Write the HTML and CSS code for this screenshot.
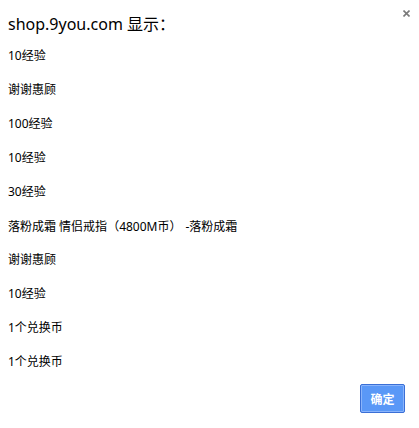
FILE: index.html
```html
<!DOCTYPE html>
<html lang="zh-CN">
<head>
<meta charset="utf-8">
<link rel="stylesheet" href="styles.css">
</head>
<body>
<div class="dialog">
  <div class="close" aria-label="关闭">
    <svg width="7" height="7" viewBox="0 0 7 7"><path d="M0.5 0.5L6.5 6.5M6.5 0.5L0.5 6.5" stroke="#7a7a7a" stroke-width="1.6" fill="none"/></svg>
  </div>
  <div class="title">shop.9you.com 显示<span class="cjk">：</span></div>
  <div class="message">
    <div class="item">10经验</div>
    <div class="item">谢谢惠顾</div>
    <div class="item">100经验</div>
    <div class="item">10经验</div>
    <div class="item">30经验</div>
    <div class="item">落粉成霜 情侣戒指<span class="cjk">（</span>4800M币<span class="cjk rp">）</span>-落粉成霜</div>
    <div class="item">谢谢惠顾</div>
    <div class="item">10经验</div>
    <div class="item">1个兑换币</div>
    <div class="item">1个兑换币</div>
  </div>
  <div class="actions">
    <button class="ok">确定</button>
  </div>
</div>
</body>
</html>
```

FILE: styles.css
```css
html, body {
  margin: 0;
  padding: 0;
  background: #ffffff;
}
body {
  font-family: "Noto Sans", "Noto Sans CJK SC", sans-serif;
  color: #000;
  width: 419px;
  height: 428px;
  overflow: hidden;
}
.dialog {
  position: relative;
  padding: 12px 14px 0 8px;
}
.close {
  position: absolute;
  top: 10px;
  left: 403px;
  width: 7px;
  height: 7px;
  line-height: 0;
}
.title {
  font-size: 16px;
  line-height: 22px;
  height: 22px;
}
.cjk {
  font-family: "Noto Sans CJK SC", sans-serif;
}
.rp {
  padding-right: 4px;
}
.message {
  margin-top: 13px;
  display: flex;
  flex-direction: column;
  gap: 17px;
  font-size: 12px;
}
.item {
  line-height: 17px;
  height: 17px;
  white-space: nowrap;
}
.actions {
  display: flex;
  justify-content: flex-end;
  margin-top: 14px;
}
.ok {
  width: 45px;
  height: 29px;
  padding: 0;
  margin: 0;
  border: 1px solid #3a6fd6;
  border-radius: 2px;
  box-shadow: inset 0 0 0 1px #8ab4fb;
  background: #5a98f7;
  color: #fff;
  font-family: "Noto Sans CJK SC", sans-serif;
  font-size: 12px;
  font-weight: bold;
}
```
